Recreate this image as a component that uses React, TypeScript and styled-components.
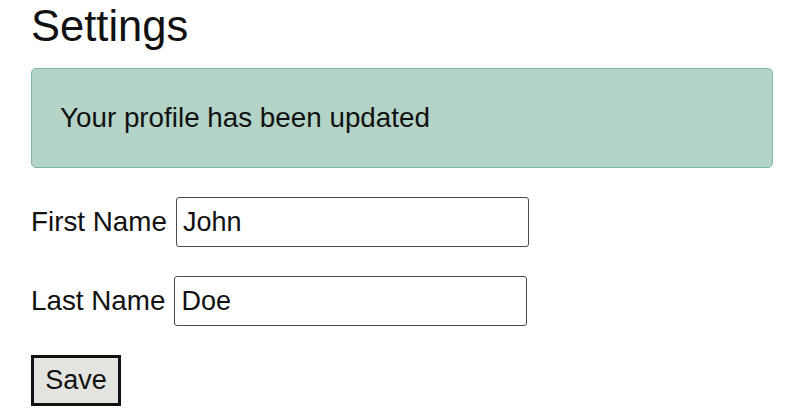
import styled, { createGlobalStyle } from "styled-components";

const GlobalStyle = createGlobalStyle`
  html, body {
    margin: 0;
    padding: 0;
    background: #ffffff;
  }
  body {
    font-family: "Liberation Sans", Arial, sans-serif;
    color: #111111;
  }
  * {
    box-sizing: border-box;
  }
`;

const Page = styled.div`
  padding: 2px 22px 0 31px;
`;

const Title = styled.h1`
  margin: 0 0 17px;
  font-size: 43.5px;
  font-weight: 400;
  line-height: normal;
`;

const Alert = styled.div`
  background-color: #b3d4c6;
  border: 1px solid #7db6b2;
  border-radius: 5px;
  padding: 33px 28px 33px;
  margin-bottom: 29px;
  font-size: 27.8px;
  line-height: normal;
`;

const Form = styled.form`
  display: flex;
  flex-direction: column;
  align-items: flex-start;
  gap: 29px;
`;

const Row = styled.div`
  display: flex;
  align-items: center;
  gap: 9px;
`;

const Label = styled.label`
  font-size: 27.8px;
`;

const Input = styled.input`
  width: 353px;
  height: 50px;
  padding: 8px 6px;
  font-family: "Liberation Sans", Arial, sans-serif;
  font-size: 27px;
  color: #111111;
  border: 1px solid #4a4a4a;
  border-radius: 3px;
  background: #ffffff;
  outline: none;
`;

const Button = styled.button`
  width: 90px;
  height: 51px;
  padding: 0;
  font-family: "Liberation Sans", Arial, sans-serif;
  font-size: 27px;
  color: #111111;
  background-color: #e3e4df;
  border: 3px solid #111111;
  border-radius: 0;
  cursor: pointer;
`;

function App() {
  return (
    <>
      <GlobalStyle />
      <Page>
        <Title>Settings</Title>
        <Alert>Your profile has been updated</Alert>
        <Form onSubmit={(e) => e.preventDefault()}>
          <Row>
            <Label htmlFor="firstName">First Name</Label>
            <Input id="firstName" defaultValue="John" />
          </Row>
          <Row>
            <Label htmlFor="lastName">Last Name</Label>
            <Input id="lastName" defaultValue="Doe" />
          </Row>
          <Button type="submit">Save</Button>
        </Form>
      </Page>
    </>
  );
}

export default App;
